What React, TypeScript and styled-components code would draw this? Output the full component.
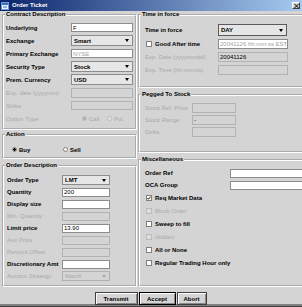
import React from 'react';
import styled, { createGlobalStyle } from 'styled-components';

const GlobalStyle = createGlobalStyle`
  html, body {
    margin: 0;
    padding: 0;
    background: #d4d4d4;
  }
  body {
    font-family: 'Liberation Sans', Arial, sans-serif;
    font-size: 6px;
    color: #000;
  }
`;

const Window = styled.div`
  width: 302px;
  height: 307px;
  box-sizing: border-box;
  overflow: hidden;
  display: flex;
  flex-direction: column;
  background: #d4d4d4;
  border-bottom: 1px solid #404040;
  box-shadow: inset 0 -2px 0 #808080;
`;

const TitleBar = styled.div`
  height: 11px;
  flex: none;
  display: flex;
  align-items: center;
  gap: 3px;
  padding: 0 2px 0 1px;
  background: linear-gradient(to right, #0a246a, #a6caf0);
  color: #fff;
  font-weight: bold;
  line-height: 11px;
`;

const CloseButton = styled.div`
  margin-left: auto;
  width: 8px;
  height: 7px;
  box-sizing: border-box;
  background: #d4d4d4;
  border: 1px solid;
  border-color: #fff #404040 #404040 #fff;
  display: flex;
  align-items: center;
  justify-content: center;
`;

const Body = styled.div`
  flex: 1;
  min-height: 0;
  display: flex;
  gap: 1px;
  padding-left: 2px;
`;

const Column = styled.div<{ $w: number }>`
  width: ${p => p.$w}px;
  flex: none;
  display: flex;
  flex-direction: column;
`;

const Panel = styled.fieldset<{ $mt?: number; $grow?: boolean }>`
  margin: ${p => p.$mt ?? 0}px 0 0;
  padding: 0;
  min-width: 0;
  border: 2px groove #ffffff;
  flex: ${p => (p.$grow ? 1 : 'none')};
`;

const Legend = styled.legend`
  margin-left: 1px;
  padding: 0 1px;
  font-weight: bold;
  line-height: 7px;
`;

const Content = styled.div<{ $pt: number; $pb: number; $pl: number }>`
  display: flex;
  flex-direction: column;
  padding: ${p => p.$pt}px 0 ${p => p.$pb}px ${p => p.$pl}px;
`;

const Row = styled.div<{ $h: number }>`
  height: ${p => p.$h}px;
  display: flex;
  align-items: center;
`;

const Label = styled.span<{ $w?: number; $disabled?: boolean }>`
  width: ${p => (p.$w ? `${p.$w}px` : 'auto')};
  flex: none;
  display: flex;
  align-items: center;
  gap: 3px;
  white-space: nowrap;
  font-weight: ${p => (p.$disabled ? 'normal' : 'bold')};
  color: ${p => (p.$disabled ? '#a9a9a9' : '#000')};
`;

const TextBox = styled.div<{ $w: number; $h: number; $disabled?: boolean; $muted?: boolean }>`
  width: ${p => p.$w}px;
  height: ${p => p.$h}px;
  box-sizing: border-box;
  flex: none;
  display: flex;
  align-items: center;
  padding-left: 1px;
  overflow: hidden;
  white-space: nowrap;
  border: 1px solid ${p => (p.$disabled ? '#b2b2b2' : '#8c8c8c')};
  background: ${p => (p.$disabled ? 'transparent' : '#fff')};
  color: ${p => (p.$muted ? '#a0a0a0' : '#000')};
`;

const ComboBox = styled.div<{ $w: number; $h: number; $disabled?: boolean; $focus?: boolean }>`
  width: ${p => p.$w}px;
  height: ${p => p.$h}px;
  box-sizing: border-box;
  flex: none;
  display: flex;
  border: 1px solid ${p => (p.$disabled ? '#b2b2b2' : p.$focus ? '#5a5a5a' : '#8c8c8c')};
  background: ${p => (p.$disabled ? 'transparent' : '#e6e6e6')};
  font-weight: ${p => (p.$disabled ? 'normal' : 'bold')};
  color: ${p => (p.$disabled ? '#a9a9a9' : '#000')};
`;

const ComboText = styled.span`
  flex: 1;
  display: flex;
  align-items: center;
  padding-left: 2px;
`;

const ComboArrow = styled.span<{ $disabled?: boolean }>`
  width: 10px;
  display: flex;
  align-items: center;
  justify-content: center;
  &::after {
    content: '';
    border-left: 2.5px solid transparent;
    border-right: 2.5px solid transparent;
    border-top: 3px solid ${p => (p.$disabled ? '#a9a9a9' : '#000')};
  }
`;

const Box = styled.span<{ $disabled?: boolean }>`
  width: 6px;
  height: 6px;
  box-sizing: border-box;
  flex: none;
  margin-left: 1px;
  display: flex;
  align-items: center;
  justify-content: center;
  border: 1px solid ${p => (p.$disabled ? '#bababa' : '#808080')};
  background: ${p => (p.$disabled ? '#dcdcdc' : '#fff')};
`;

const Options = styled.div<{ $pl: number }>`
  display: flex;
  padding-left: ${p => p.$pl}px;
`;

const Option = styled.span<{ $w: number; $disabled?: boolean }>`
  width: ${p => p.$w}px;
  display: flex;
  align-items: center;
  gap: 2px;
  font-weight: ${p => (p.$disabled ? 'normal' : 'bold')};
  color: ${p => (p.$disabled ? '#a9a9a9' : '#000')};
`;

const RadioDot = styled.span<{ $on?: boolean; $disabled?: boolean }>`
  width: 5px;
  height: 5px;
  box-sizing: border-box;
  border-radius: 50%;
  flex: none;
  border: 1px solid ${p => (p.$disabled ? '#bababa' : '#808080')};
  background: ${p =>
    p.$on
      ? `radial-gradient(circle, ${p.$disabled ? '#a9a9a9' : '#000'} 0 1.3px, ${p.$disabled ? '#e4e4e4' : '#fff'} 1.5px)`
      : p.$disabled
      ? '#e4e4e4'
      : '#fff'};
`;

const ButtonBar = styled.div`
  height: 19px;
  flex: none;
  display: flex;
  justify-content: center;
  gap: 1px;
  padding: 5px 1px 0 0;
  box-sizing: border-box;
`;

const Button = styled.button<{ $w: number; $default?: boolean }>`
  width: ${p => p.$w}px;
  height: 13px;
  padding: 0;
  box-sizing: border-box;
  font-family: 'Liberation Sans', Arial, sans-serif;
  font-size: 6px;
  font-weight: bold;
  color: #000;
  background: #d4d4d4;
  border: 1px solid ${p => (p.$default ? '#000' : '#404040')};
  box-shadow: inset 1px 1px 0 #fff, inset -1px -1px 0 #888;
`;

const Check = ({ on }: { on?: boolean }) =>
  on ? (
    <svg width="4" height="4" viewBox="0 0 4 4">
      <path d="M0.3 2 L1.5 3.3 L3.7 0.6" stroke="#000" strokeWidth="0.9" fill="none" />
    </svg>
  ) : null;

const Field = ({ w, h, value, disabled, muted }: { w: number; h: number; value?: string; disabled?: boolean; muted?: boolean }) => (
  <TextBox $w={w} $h={h} $disabled={disabled} $muted={muted}>
    {value}
  </TextBox>
);

const Combo = ({ w, h, value, disabled, focus }: { w: number; h: number; value: string; disabled?: boolean; focus?: boolean }) => (
  <ComboBox $w={w} $h={h} $disabled={disabled} $focus={focus}>
    <ComboText>{value}</ComboText>
    <ComboArrow $disabled={disabled} />
  </ComboBox>
);

const CheckRow = ({ label, on, disabled }: { label: string; on?: boolean; disabled?: boolean }) => (
  <Row $h={13}>
    <Label $disabled={disabled}>
      <Box $disabled={disabled}>
        <Check on={on} />
      </Box>
      {label}
    </Label>
  </Row>
);

const orderRows: { label: string; kind: 'combo' | 'field'; value?: string; disabled?: boolean }[] = [
  { label: 'Order Type', kind: 'combo', value: 'LMT' },
  { label: 'Quantity', kind: 'field', value: '200' },
  { label: 'Display size', kind: 'field' },
  { label: 'Min. Quantity', kind: 'field', disabled: true },
  { label: 'Limit price', kind: 'field', value: '13.90' },
  { label: 'Aux Price', kind: 'field', disabled: true },
  { label: 'Percent Offset', kind: 'field', disabled: true },
  { label: 'Discretionary Amt', kind: 'field' },
  { label: 'Auction Strategy', kind: 'combo', value: 'Match', disabled: true },
];

const App: React.FC = () => {
  return (
    <Window>
      <GlobalStyle />
      <TitleBar>
        <svg width="8" height="8" viewBox="0 0 8 8">
          <rect x="0.5" y="0.5" width="7" height="7" fill="#eaf2ff" stroke="#6f9ad8" />
          <rect x="1" y="1" width="6" height="2" fill="#3b6fc4" />
          <path d="M2 5 H6" stroke="#3b6fc4" />
        </svg>
        Order Ticket
        <CloseButton>
          <svg width="5" height="4" viewBox="0 0 5 4">
            <path d="M0.5 0 L4.5 4 M4.5 0 L0.5 4" stroke="#000" strokeWidth="1" />
          </svg>
        </CloseButton>
      </TitleBar>

      <Body>
        <Column $w={135}>
          <Panel>
            <Legend>Contract Description</Legend>
            <Content $pt={3} $pb={3} $pl={2}>
              <Row $h={13}>
                <Label $w={65}>Underlying</Label>
                <Field w={62} h={9} value="F" />
              </Row>
              <Row $h={13}>
                <Label $w={65}>Exchange</Label>
                <Combo w={62} h={11} value="Smart" />
              </Row>
              <Row $h={13}>
                <Label $w={65}>Primary Exchange</Label>
                <Field w={62} h={9} value="NYSE" muted />
              </Row>
              <Row $h={13}>
                <Label $w={65}>Security Type</Label>
                <Combo w={62} h={11} value="Stock" />
              </Row>
              <Row $h={13}>
                <Label $w={65}>Prem. Currency</Label>
                <Combo w={62} h={11} value="USD" />
              </Row>
              <Row $h={13}>
                <Label $w={65} $disabled>Exp. date (yyyymm)</Label>
                <Field w={62} h={10} disabled />
              </Row>
              <Row $h={13}>
                <Label $w={65} $disabled>Strike</Label>
                <Field w={62} h={9} disabled />
              </Row>
              <Row $h={13}>
                <Label $w={65} $disabled>Option Type</Label>
                <Options $pl={11}>
                  <Option $w={25} $disabled>
                    <RadioDot $on $disabled />
                    Call
                  </Option>
                  <Option $w={20} $disabled>
                    <RadioDot $disabled />
                    Put
                  </Option>
                </Options>
              </Row>
            </Content>
          </Panel>

          <Panel $mt={1}>
            <Legend>Action</Legend>
            <Content $pt={5} $pb={1} $pl={0}>
              <Row $h={13}>
                <Options $pl={8}>
                  <Option $w={51}>
                    <RadioDot $on />
                    Buy
                  </Option>
                  <Option $w={30}>
                    <RadioDot />
                    Sell
                  </Option>
                </Options>
              </Row>
            </Content>
          </Panel>

          <Panel $mt={3} $grow>
            <Legend>Order Description</Legend>
            <Content $pt={5} $pb={0} $pl={3}>
              {orderRows.map(r => (
                <Row $h={12} key={r.label}>
                  <Label $w={55} $disabled={r.disabled}>{r.label}</Label>
                  {r.kind === 'combo' ? (
                    <Combo w={48} h={10} value={r.value ?? ''} disabled={r.disabled} />
                  ) : (
                    <Field w={48} h={9} value={r.value} disabled={r.disabled} />
                  )}
                </Row>
              ))}
            </Content>
          </Panel>
        </Column>

        <Column $w={172}>
          <Panel>
            <Legend>Time in force</Legend>
            <Content $pt={5} $pb={10} $pl={5}>
              <Row $h={14}>
                <Label $w={73}>Time in force</Label>
                <Combo w={69} h={12} value="DAY" focus />
              </Row>
              <Row $h={13}>
                <Label $w={73}>
                  <Box />
                  Good After time
                </Label>
                <Field w={70} h={10} value="20041126 hh:mm:ss EST" muted />
              </Row>
              <Row $h={13}>
                <Label $w={73} $disabled>Exp. Date (yyyymmdd)</Label>
                <Field w={70} h={10} value="20041126" disabled />
              </Row>
              <Row $h={13}>
                <Label $w={73} $disabled>Exp. Time (hh:mm:ss)</Label>
                <Field w={70} h={10} disabled />
              </Row>
            </Content>
          </Panel>

          <Panel $mt={3}>
            <Legend>Pegged To Stock</Legend>
            <Content $pt={4} $pb={13} $pl={5}>
              <Row $h={12}>
                <Label $w={47} $disabled>Stock Ref. Price</Label>
                <Field w={44} h={10} disabled />
              </Row>
              <Row $h={12}>
                <Label $w={47} $disabled>Stock Range</Label>
                <Field w={44} h={10} value="-" disabled />
              </Row>
              <Row $h={12}>
                <Label $w={47} $disabled>Delta</Label>
                <Field w={44} h={10} disabled />
              </Row>
            </Content>
          </Panel>

          <Panel $mt={3} $grow>
            <Legend>Miscellaneous</Legend>
            <Content $pt={4} $pb={0} $pl={5}>
              <Row $h={12}>
                <Label $w={85}>Order Ref</Label>
                <Field w={80} h={9} />
              </Row>
              <Row $h={12}>
                <Label $w={85}>OCA Group</Label>
                <Field w={80} h={9} />
              </Row>
              <CheckRow label="Req Market Data" on />
              <CheckRow label="Block Order" disabled />
              <CheckRow label="Sweep to fill" />
              <CheckRow label="Hidden" disabled />
              <CheckRow label="All or None" />
              <CheckRow label="Regular Trading Hour only" />
            </Content>
          </Panel>
        </Column>
      </Body>

      <ButtonBar>
        <Button $w={43}>Transmit</Button>
        <Button $w={37} $default>Accept</Button>
        <Button $w={30}>Abort</Button>
      </ButtonBar>
    </Window>
  );
};

export default App;
